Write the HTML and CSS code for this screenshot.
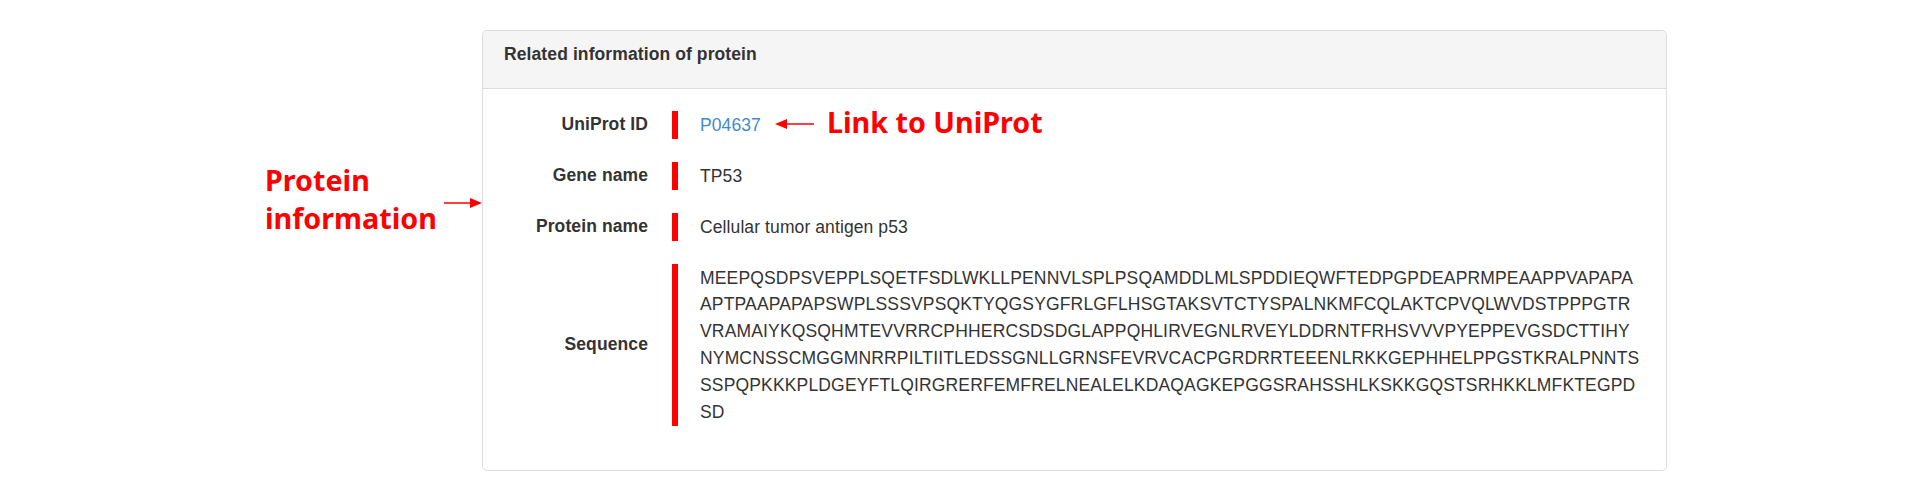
FILE: index.html
```html
<!DOCTYPE html>
<html lang="en">
<head>
  <meta charset="UTF-8"/>
  <meta name="viewport" content="width=device-width,initial-scale=1.0"/>
  <title>Related information of protein</title>
  <link rel="stylesheet" href="styles.css">
</head>
<body>
  <div class="page">

    <!-- PROTEIN PANEL -->
    <div class="panel">
      <div class="panel-heading">Related information of protein</div>
      <div class="panel-body">
        <div class="info-row">
          <div class="info-label">UniProt ID</div>
          <div class="info-value"><a href="#">P04637</a></div>
        </div>
        <div class="info-row">
          <div class="info-label">Gene name</div>
          <div class="info-value">TP53</div>
        </div>
        <div class="info-row">
          <div class="info-label">Protein name</div>
          <div class="info-value">Cellular tumor antigen p53</div>
        </div>
        <div class="info-row">
          <div class="info-label">Sequence</div>
          <div class="info-value seq">MEEPQSDPSVEPPLSQETFSDLWKLLPENNVLSPLPSQAMDDLMLSPDDIEQWFTEDPGPDEAPRMPEAAPPVAPAPAAPTPAAPAPAPSWPLSSSVPSQKTYQGSYGFRLGFLHSGTAKSVTCTYSPALNKMFCQLAKTCPVQLWVDSTPPPGTRVRAMAIYKQSQHMTEVVRRCPHHERCSDSDGLAPPQHLIRVEGNLRVEYLDDRNTFRHSVVVPYEPPEVGSDCTTIHYNYMCNSSCMGGMNRRPILTIITLEDSSGNLLGRNSFEVRVCACPGRDRRTEEENLRKKGEPHHELPPGSTKRALPNNTSSSPQPKKKPLDGEYFTLQIRGRERFEMFRELNEALELKDAQAGKEPGGSRAHSSHLKSKKGQSTSRHKKLMFKTEGPDSD</div>
        </div>
      </div>
    </div>

    <!-- ANNOTATIONS -->
    <div class="note note-protein">Protein<br>information</div>
    <svg class="arrow arrow-protein" width="40" height="14" viewBox="0 0 40 14">
      <line x1="0" y1="7" x2="28" y2="7" stroke="#f00" stroke-width="1.5"/>
      <polygon points="26,2 38,7 26,12" fill="#f00"/>
    </svg>

    <svg class="arrow arrow-link" width="40" height="14" viewBox="0 0 40 14">
      <line x1="10" y1="7" x2="39" y2="7" stroke="#f00" stroke-width="1.5"/>
      <polygon points="12,2 0,7 12,12" fill="#f00"/>
    </svg>
    <div class="note note-link">Link to UniProt</div>

  </div>
</body>
</html>
```

FILE: styles.css
```css
body { margin:0; font-family:"Liberation Sans", Arial, sans-serif; font-size:17.5px; letter-spacing:0.1px; color:#333; background:#fff; }
.page { position:relative; padding:30px 0 0 482px; height:470px; }

.panel { width:1185px; box-sizing:border-box; border:1px solid #ddd; border-radius:5px; background:#fff; }
.panel-heading {
  padding:11px 21px 21px;
  line-height:25px;
  font-weight:bold;
  background:#f5f5f5;
  border-bottom:1px solid #ddd;
  border-radius:5px 5px 0 0;
}
.panel-body { padding:22px 25px 21px 0; }

.info-row {
  display:grid;
  grid-template-columns:165px 1fr;
  column-gap:24px;
  align-items:center;
  margin-bottom:23px;
}
.info-label { text-align:right; font-weight:bold; }
.info-value {
  border-left:6px solid #f00;
  padding:0.6px 0 0.6px 22px;
  line-height:26.8px;
}
.info-value a { color:#428bca; text-decoration:none; }
.info-value.seq { word-break:break-all; letter-spacing:0.16px; }

.note {
  position:absolute;
  font-family:"Noto Sans", "Open Sans", sans-serif;
  font-weight:bold;
  font-size:28.7px;
  line-height:38px;
  letter-spacing:0;
  color:#f00;
  white-space:nowrap;
}
.note-protein { left:265px; top:161px; }
.note-link { left:827px; top:103px; }

.arrow { position:absolute; }
.arrow-protein { left:444px; top:196px; }
.arrow-link { left:775px; top:117px; }
```
